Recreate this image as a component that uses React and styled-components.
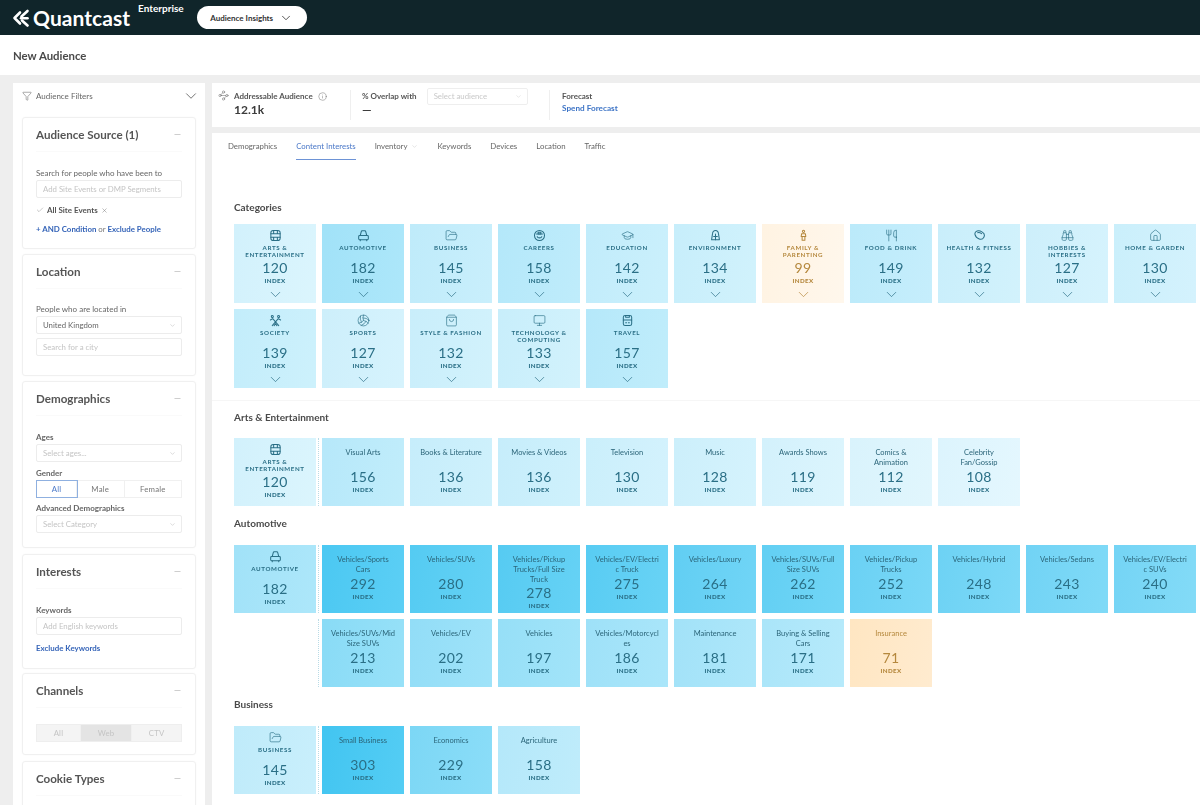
import React from 'react';
import styled, { createGlobalStyle } from 'styled-components';
import {
  Binoculars, ChevronDown, Check, FolderOpen, GraduationCap, House, Info, Minus, Monitor,
  ShoppingBag, Utensils, Volleyball, Waypoints, X, Filter,
} from 'lucide-react';

// small drawings for the tile icons lucide has no close match for
const drawn = (body) =>
  function DrawnIcon({ size = 13 }) {
    return (
      <svg width={size} height={size} viewBox="0 0 14 14" fill="none" stroke="currentColor" strokeWidth="1.1" strokeLinecap="round" strokeLinejoin="round">
        {body}
      </svg>
    );
  };

const ArtsIcon = drawn(<><rect x="2" y="1.5" width="10" height="11" rx="2.5" /><path d="M2 5.2h10M2 8.8h10M5 1.5v3.7M9 1.5v3.7M5 8.8v3.7M9 8.8v3.7" /></>);
const CarIcon = drawn(<><path d="M3.5 7 4.6 2.8c.1-.5.5-.8 1-.8h2.8c.5 0 .9.3 1 .8L10.500 7" /><rect x="1.800" y="7" width="10.400" height="4.500" rx="1" /><path d="M3.500 11.500v1.200M10.500 11.500v1.200" /></>);
const CareersIcon = drawn(<><circle cx="7" cy="7" r="5.400" /><path d="M3.800 5.500h6.400M4.500 8.200c.6 1.800 4.400 1.800 5 0" /><path d="M5.500 3.500h3v2h-3z" /></>);
const EnvironmentIcon = drawn(<><path d="M7 1.500c2 0 3 1.500 3.200 3.500l1 6.500H2.800l1-6.500C4 3 5 1.500 7 1.500z" /><path d="M5 8h4M7 5.500V11.500" /></>);
const FamilyIcon = drawn(<><circle cx="7" cy="2.500" r="1.200" /><path d="M5 5h4l.5 3h-5zM5.500 8v4h3V8" /></>);
const HealthIcon = drawn(<><path d="M3.200 2.800c2-1.500 4.500-.9 6.800.5 2 1.200 2.800 3.300 1.700 5.500-1 1.900-3 2.800-5 1.900C4.500 9.800 2.500 8 2.100 5.800c-.2-1.200.2-2.300 1.100-3z" /><path d="M5 4c1.500-.4 3 .2 4.300 1" /></>);
const SocietyIcon = drawn(<><circle cx="3.600" cy="2.600" r="1.100" /><circle cx="10.400" cy="2.600" r="1.100" /><path d="M1.500 6.500 4 5l6.500 7.500M12.500 6.500 10 5l-6.500 7.500M5.500 12.500 7 10.500M8.500 12.500 7 10.500" /></>);
const TravelIcon = drawn(<><rect x="2.500" y="1.500" width="9" height="11" rx="2" /><path d="M2.500 6.500h9M5 9.500h1M8 9.500h1M5 1.500v2h4v-2" /></>);

const categories = [
  { name: 'Arts & Entertainment', value: 120, icon: ArtsIcon },
  { name: 'Automotive', value: 182, icon: CarIcon },
  { name: 'Business', value: 145, icon: FolderOpen },
  { name: 'Careers', value: 158, icon: CareersIcon },
  { name: 'Education', value: 142, icon: GraduationCap },
  { name: 'Environment', value: 134, icon: EnvironmentIcon },
  { name: 'Family & Parenting', value: 99, icon: FamilyIcon },
  { name: 'Food & Drink', value: 149, icon: Utensils },
  { name: 'Health & Fitness', value: 132, icon: HealthIcon },
  { name: 'Hobbies & Interests', value: 127, icon: Binoculars },
  { name: 'Home & Garden', value: 130, icon: House },
  { name: 'Society', value: 139, icon: SocietyIcon },
  { name: 'Sports', value: 127, icon: Volleyball },
  { name: 'Style & Fashion', value: 132, icon: ShoppingBag },
  { name: 'Technology & Computing', value: 133, icon: Monitor },
  { name: 'Travel', value: 157, icon: TravelIcon },
];

const arts = [
  ['Visual Arts', 156], ['Books & Literature', 136], ['Movies & Videos', 136], ['Television', 130],
  ['Music', 128], ['Awards Shows', 119], ['Comics & Animation', 112], ['Celebrity Fan/Gossip', 108],
];

const autoFirst = [
  ['Vehicles/Sports Cars', 292], ['Vehicles/SUVs', 280], ['Vehicles/Pickup Trucks/Full Size Truck', 278],
  ['Vehicles/EV/Electric Truck', 275], ['Vehicles/Luxury', 264], ['Vehicles/SUVs/Full Size SUVs', 262],
  ['Vehicles/Pickup Trucks', 252], ['Vehicles/Hybrid', 248], ['Vehicles/Sedans', 243],
  ['Vehicles/EV/Electric SUVs', 240],
];

const autoSecond = [
  ['Vehicles/SUVs/Mid Size SUVs', 213], ['Vehicles/EV', 202], ['Vehicles', 197], ['Vehicles/Motorcycles', 186],
  ['Maintenance', 181], ['Buying & Selling Cars', 171], ['Insurance', 71],
];

const business = [['Small Business', 303], ['Economics', 229], ['Agriculture', 158]];

const tabs = ['Demographics', 'Content Interests', 'Inventory', 'Keywords', 'Devices', 'Location', 'Traffic'];

// lighter tile for a low index, stronger blue for a high one; under 100 goes orange
function tileColour(value) {
  if (value < 100) {
    return value < 80 ? ['#ffe6c2', '#ffebcf'] : ['#fff3e2', '#fff7ec'];
  }
  const t = Math.min((value - 100) / 203, 1);
  const mix = (a, b) => Math.round(a + (b - a) * t);
  const base = `rgb(${mix(226, 66)},${mix(246, 197)},${mix(253, 241)})`;
  const light = `rgb(${mix(234, 84)},${mix(249, 205)},${mix(254, 244)})`;
  return [base, light];
}

const GlobalStyle = createGlobalStyle`
  html, body {
    margin: 0;
    background: #eeeeee;
  }
  body {
    font-family: Lato, "Open Sans", sans-serif;
    color: #444;
  }
`;

const Page = styled.div`
  width: 1200px;
  height: 805px;
  overflow: hidden;
  filter: blur(0.4px);
`;

const TopBar = styled.header`
  height: 35px;
  background: #10252a;
  display: flex;
  align-items: center;
  padding-left: 12px;
  color: #fff;
`;

const LogoName = styled.span`
  font-size: 21px;
  font-weight: 700;
  margin-left: 3px;
  letter-spacing: 0.05px;
`;

const Edition = styled.span`
  font-size: 10px;
  font-weight: 700;
  align-self: flex-start;
  margin: 2px 0 0 8px;
`;

const ProductPill = styled.div`
  margin-left: 13px;
  width: 110px;
  height: 23px;
  border-radius: 12px;
  background: #fff;
  color: #333;
  font-size: 8px;
  font-weight: 700;
  display: flex;
  align-items: center;
  justify-content: center;
  gap: 6px;
`;

const TitleBar = styled.div`
  height: 40px;
  background: #fff;
  display: flex;
  align-items: center;
  padding-left: 13px;
  font-size: 11.4px;
  font-weight: 700;
  color: #4a4a4a;
`;

const Body = styled.div`
  display: flex;
  padding: 8px 0 0 13px;
  gap: 7px;
`;

const Sidebar = styled.aside`
  width: 192px;
  height: 722px;
  flex: none;
  background: #fff;
  padding: 0 9px;
  box-sizing: border-box;
`;

const FilterHead = styled.div`
  height: 34px;
  display: flex;
  align-items: center;
  font-size: 8px;
  color: #666;
  gap: 4px;
  padding: 0 0 8px;
  box-sizing: border-box;
  margin-right: -4px;
  & > span { flex: 1; }
`;

const Card = styled.section`
  width: 174px;
  height: ${({ $height }) => $height}px;
  box-sizing: border-box;
  border: 1px solid #f0f0f0;
  border-radius: 3px;
  padding: 0 13px;
  margin-bottom: ${({ $gap }) => $gap}px;
  box-shadow: 0 0 2px rgba(0, 0, 0, 0.03);
`;

const CardTitle = styled.h3`
  margin: 0;
  height: 33px;
  display: flex;
  align-items: center;
  justify-content: space-between;
  font-size: 11.6px;
  font-weight: 700;
  color: #555;
  border-bottom: 1px solid #fafafa;
  & svg { color: #999; }
`;

const FieldLabel = styled.div`
  font-size: 8px;
  line-height: 9px;
  color: #666;
  font-weight: ${({ $bold }) => ($bold ? 700 : 400)};
  margin-top: ${({ $top }) => $top}px;
  margin-bottom: 2px;
`;

const Field = styled.div`
  height: 18px;
  box-sizing: border-box;
  border: 1px solid #ececec;
  border-radius: 2px;
  display: flex;
  align-items: center;
  justify-content: space-between;
  padding: 0 5px 0 6px;
  font-size: 7.8px;
  color: ${({ $filled }) => ($filled ? '#666' : '#c4c4c4')};
  margin-top: ${({ $top }) => $top || 0}px;
  & svg { color: #aaa; }
`;

const Chip = styled.div`
  display: flex;
  align-items: center;
  gap: 3px;
  margin-top: 7px;
  font-size: 8px;
  font-weight: 700;
  color: #555;
  height: 10px;
  & svg { color: #777; }
`;

const LinkRow = styled.div`
  margin-top: ${({ $top }) => $top}px;
  font-size: 7.9px;
  line-height: 9px;
  font-weight: 700;
  color: #3564b8;
  & span { color: #777; font-weight: 400; }
`;

const Segments = styled.div`
  display: flex;
  height: 18px;
  margin-top: ${({ $top }) => $top || 0}px;
  border: 1px solid ${({ $muted }) => ($muted ? '#eeeeee' : '#f0f0f0')};
  box-sizing: border-box;
  background: ${({ $muted }) => ($muted ? '#f4f4f4' : '#fff')};
`;

const Segment = styled.div`
  flex: ${({ $grow }) => $grow};
  display: flex;
  align-items: center;
  justify-content: center;
  font-size: 7.8px;
  letter-spacing: 0.2px;
  color: ${({ $active, $muted }) => ($active ? '#4a78c8' : $muted ? '#c4c4c4' : '#777')};
  box-shadow: ${({ $active }) => ($active ? '0 0 0 1px #8fb0e0' : 'none')};
  background: ${({ $selected }) => ($selected ? '#e4e4e4' : 'transparent')};
  border-right: 1px solid #f0f0f0;
  &:last-child { border-right: 0; }
`;

const Main = styled.main`
  flex: 1;
  min-width: 0;
  display: flex;
  flex-direction: column;
  gap: 6px;
`;

const StatsBar = styled.div`
  height: 44px;
  background: #fff;
  display: flex;
  padding-left: 6px;
`;

const StatBlock = styled.div`
  width: ${({ $width }) => $width}px;
  box-sizing: border-box;
  margin-top: 7px;
  height: 30px;
  border-right: ${({ $last }) => ($last ? 0 : '1px solid #efefef')};
  padding-left: ${({ $pad }) => $pad}px;
  display: flex;
  gap: 5px;
  color: #666;
  & svg { flex: none; }
`;

const StatLabel = styled.div`
  display: flex;
  align-items: center;
  gap: 5px;
  height: 12px;
  font-size: 8px;
  font-weight: 700;
  color: #555;
  white-space: nowrap;
`;

const StatValue = styled.div`
  font-size: 12px;
  font-weight: 700;
  line-height: 14px;
  margin-top: 1px;
  color: #3c3c3c;
`;

const OverlapSelect = styled.div`
  width: 101px;
  height: 17px;
  margin: 0 0 0 5px;
  box-sizing: border-box;
  border: 1px solid #eeeeee;
  border-radius: 2px;
  display: flex;
  align-items: center;
  justify-content: space-between;
  padding: 0 5px 0 6px;
  font-size: 7.8px;
  font-weight: 400;
  color: #c8c8c8;
`;

const SpendLink = styled.div`
  font-size: 8.2px;
  font-weight: 700;
  color: #3d74c6;
  margin-top: 1px;
`;

const Content = styled.div`
  height: 680px;
  background: #fff;
  padding-left: 22px;
`;

const TabBar = styled.nav`
  display: flex;
  height: 27px;
  gap: 19px;
  margin: 0 0 39px -6px;
`;

const Tab = styled.div`
  height: 26px;
  display: flex;
  align-items: center;
  gap: 4px;
  font-size: 7.8px;
  white-space: nowrap;
  color: ${({ $active }) => ($active ? '#4a78c8' : '#666')};
  border-bottom: 1px solid ${({ $active }) => ($active ? '#6d93d6' : 'transparent')};
  & svg { color: #bbb; }
`;

const SectionTitle = styled.h4`
  margin: 0;
  height: 16px;
  line-height: 16px;
  font-size: 10px;
  font-weight: 700;
  color: #4a4a4a;
  margin-bottom: ${({ $after }) => $after}px;
`;

const Rule = styled.div`
  height: 1px;
  background: #f6f6f6;
  margin: ${({ $before }) => $before}px 0 ${({ $after }) => $after}px -22px;
`;

const TileGrid = styled.div`
  display: grid;
  grid-template-columns: repeat(11, 82px);
  gap: 6px;
  margin-bottom: ${({ $after }) => $after || 0}px;
`;

const TileBox = styled.div`
  position: relative;
  height: ${({ $height }) => $height}px;
  text-align: center;
  box-sizing: border-box;
  padding-top: ${({ $head }) => ($head ? 4 : 10)}px;
  background: linear-gradient(100deg, ${({ $from }) => $from}, ${({ $to }) => $to});
  color: ${({ $warm }) => ($warm ? '#b5883d' : '#2a6f86')};
`;

const DottedEdge = styled.i`
  position: absolute;
  top: 0;
  bottom: 0;
  right: -3px;
  border-right: 1px dotted #b9dbe6;
`;

const EmptyCell = styled.div`
  position: relative;
`;

const IconSlot = styled.div`
  height: 15px;
  display: flex;
  justify-content: center;
  align-items: center;
`;

const HeadLabel = styled.div`
  height: 15px;
  padding: 0 6px;
  margin-top: 1px;
  font-size: 6.2px;
  line-height: 7.2px;
  letter-spacing: 0.6px;
  font-weight: 700;
  text-transform: uppercase;
`;

const TileName = styled.div`
  min-height: 19.6px;
  padding: 0 8px;
  font-size: 7.5px;
  line-height: 9.8px;
  overflow-wrap: anywhere;
  color: ${({ $warm }) => ($warm ? '#b5883d' : '#2b6579')};
`;

const TileValue = styled.div`
  font-size: 14px;
  line-height: 18px;
  letter-spacing: 0.3px;
`;

const TileIndex = styled.div`
  font-size: 6.2px;
  line-height: 7px;
  font-weight: 900;
  letter-spacing: 0.4px;
`;

const TileChevron = styled.div`
  height: 12px;
  margin-top: 4px;
  display: flex;
  justify-content: center;
  align-items: center;
`;

function HeadTile({ name, value, icon: Icon, expandable, height }) {
  const [from, to] = tileColour(value);
  const warm = value < 100;
  return (
    <TileBox $head $height={height} $from={from} $to={to} $warm={warm}>
      <IconSlot><Icon size={13} strokeWidth={1.2} /></IconSlot>
      <HeadLabel>{name}</HeadLabel>
      <TileValue>{value}</TileValue>
      <TileIndex>INDEX</TileIndex>
      {expandable && <TileChevron><ChevronDown size={17} strokeWidth={1} /></TileChevron>}
      {!expandable && <DottedEdge />}
    </TileBox>
  );
}

function Tile({ name, value }) {
  const [from, to] = tileColour(value);
  const warm = value < 100;
  return (
    <TileBox $height={68} $from={from} $to={to} $warm={warm}>
      <TileName $warm={warm}>{name}</TileName>
      <TileValue>{value}</TileValue>
      <TileIndex>INDEX</TileIndex>
    </TileBox>
  );
}

function QuantcastMark() {
  return (
    <svg width="18" height="18" viewBox="0 0 18 18" fill="none" stroke="#fff" strokeWidth="2.6" strokeLinecap="round" strokeLinejoin="round">
      <path d="M8 3.500 2.500 9 8 14.500" />
      <path d="M15.500 2 9.500 7.500" />
      <path d="M9 9.200h6.500" />
      <path d="M10 11.500l5.500 5" />
    </svg>
  );
}

function Select({ children, filled, top }) {
  return (
    <Field $filled={filled} $top={top}>
      {children}
      <ChevronDown size={7} strokeWidth={1.4} />
    </Field>
  );
}

function FilterCard({ title, height, gap, children }) {
  return (
    <Card $height={height} $gap={gap}>
      <CardTitle>
        {title}
        <Minus size={9} strokeWidth={1.3} />
      </CardTitle>
      {children}
    </Card>
  );
}

export default function App() {
  return (
    <Page>
      <GlobalStyle />
      <TopBar>
        <QuantcastMark />
        <LogoName>Quantcast</LogoName>
        <Edition>Enterprise</Edition>
        <ProductPill>
          Audience Insights
          <ChevronDown size={14} strokeWidth={1.4} />
        </ProductPill>
      </TopBar>
      <TitleBar>New Audience</TitleBar>
      <Body>
        <Sidebar>
          <FilterHead>
            <Filter size={10} strokeWidth={1.3} />
            <span>Audience Filters</span>
            <ChevronDown size={18} strokeWidth={1.2} />
          </FilterHead>
          <FilterCard title="Audience Source (1)" height={132} gap={5}>
            <FieldLabel $top={17}>Search for people who have been to</FieldLabel>
            <Field>Add Site Events or DMP Segments</Field>
            <Chip>
              <Check size={8} strokeWidth={1.2} />
              All Site Events
              <X size={7} strokeWidth={1.6} />
            </Chip>
            <LinkRow $top={10}>+ AND Condition <span>or</span> Exclude People</LinkRow>
          </FilterCard>
          <FilterCard title="Location" height={122} gap={5}>
            <FieldLabel $top={16}>People who are located in</FieldLabel>
            <Select filled>United Kingdom</Select>
            <Field $top={4}>Search for a city</Field>
          </FilterCard>
          <FilterCard title="Demographics" height={167} gap={6}>
            <FieldLabel $bold $top={17}>Ages</FieldLabel>
            <Select>Select ages...</Select>
            <FieldLabel $bold $top={7}>Gender</FieldLabel>
            <Segments>
              <Segment $grow={40} $active>All</Segment>
              <Segment $grow={48}>Male</Segment>
              <Segment $grow={58}>Female</Segment>
            </Segments>
            <FieldLabel $bold $top={6}>Advanced Demographics</FieldLabel>
            <Select>Select Category</Select>
          </FilterCard>
          <FilterCard title="Interests" height={115} gap={4}>
            <FieldLabel $bold $top={17}>Keywords</FieldLabel>
            <Field>Add English keywords</Field>
            <LinkRow $top={9}>Exclude Keywords</LinkRow>
          </FilterCard>
          <FilterCard title="Channels" height={82} gap={6}>
            <Segments $muted $top={16}>
              <Segment $grow={44} $muted>All</Segment>
              <Segment $grow={52} $muted $selected>Web</Segment>
              <Segment $grow={50} $muted>CTV</Segment>
            </Segments>
          </FilterCard>
          <FilterCard title="Cookie Types" height={60} gap={0} />
        </Sidebar>
        <Main>
          <StatsBar>
            <StatBlock $width={133} $pad={0}>
              <Waypoints size={11} strokeWidth={1.1} />
              <div>
                <StatLabel>
                  Addressable Audience
                  <Info size={9} strokeWidth={1.1} />
                </StatLabel>
                <StatValue>12.1k</StatValue>
              </div>
            </StatBlock>
            <StatBlock $width={199} $pad={11}>
              <div>
                <StatLabel>
                  % Overlap with
                  <OverlapSelect>
                    Select audience
                    <ChevronDown size={7} strokeWidth={1.4} />
                  </OverlapSelect>
                </StatLabel>
                <StatValue>—</StatValue>
              </div>
            </StatBlock>
            <StatBlock $width={120} $pad={12} $last>
              <div>
                <StatLabel>Forecast</StatLabel>
                <SpendLink>Spend Forecast</SpendLink>
              </div>
            </StatBlock>
          </StatsBar>
          <Content>
            <TabBar>
              {tabs.map((tab) => (
                <Tab key={tab} $active={tab === 'Content Interests'}>
                  {tab}
                  {tab === 'Inventory' && <ChevronDown size={7} strokeWidth={1.3} />}
                </Tab>
              ))}
            </TabBar>
            <SectionTitle $after={9}>Categories</SectionTitle>
            <TileGrid>
              {categories.map((c) => (
                <HeadTile key={c.name} name={c.name} value={c.value} icon={c.icon} expandable height={79} />
              ))}
            </TileGrid>
            <Rule $before={12} $after={8} />
            <SectionTitle $after={13}>Arts &amp; Entertainment</SectionTitle>
            <TileGrid $after={9}>
              <HeadTile name="Arts & Entertainment" value={120} icon={ArtsIcon} height={68} />
              {arts.map(([name, value]) => <Tile key={name} name={name} value={value} />)}
            </TileGrid>
            <SectionTitle $after={14}>Automotive</SectionTitle>
            <TileGrid $after={9}>
              <HeadTile name="Automotive" value={182} icon={CarIcon} height={68} />
              {autoFirst.map(([name, value]) => <Tile key={name} name={name} value={value} />)}
              <EmptyCell><DottedEdge /></EmptyCell>
              {autoSecond.map(([name, value]) => <Tile key={name} name={name} value={value} />)}
            </TileGrid>
            <SectionTitle $after={14}>Business</SectionTitle>
            <TileGrid>
              <HeadTile name="Business" value={145} icon={FolderOpen} height={68} />
              {business.map(([name, value]) => <Tile key={name} name={name} value={value} />)}
            </TileGrid>
          </Content>
        </Main>
      </Body>
    </Page>
  );
}
